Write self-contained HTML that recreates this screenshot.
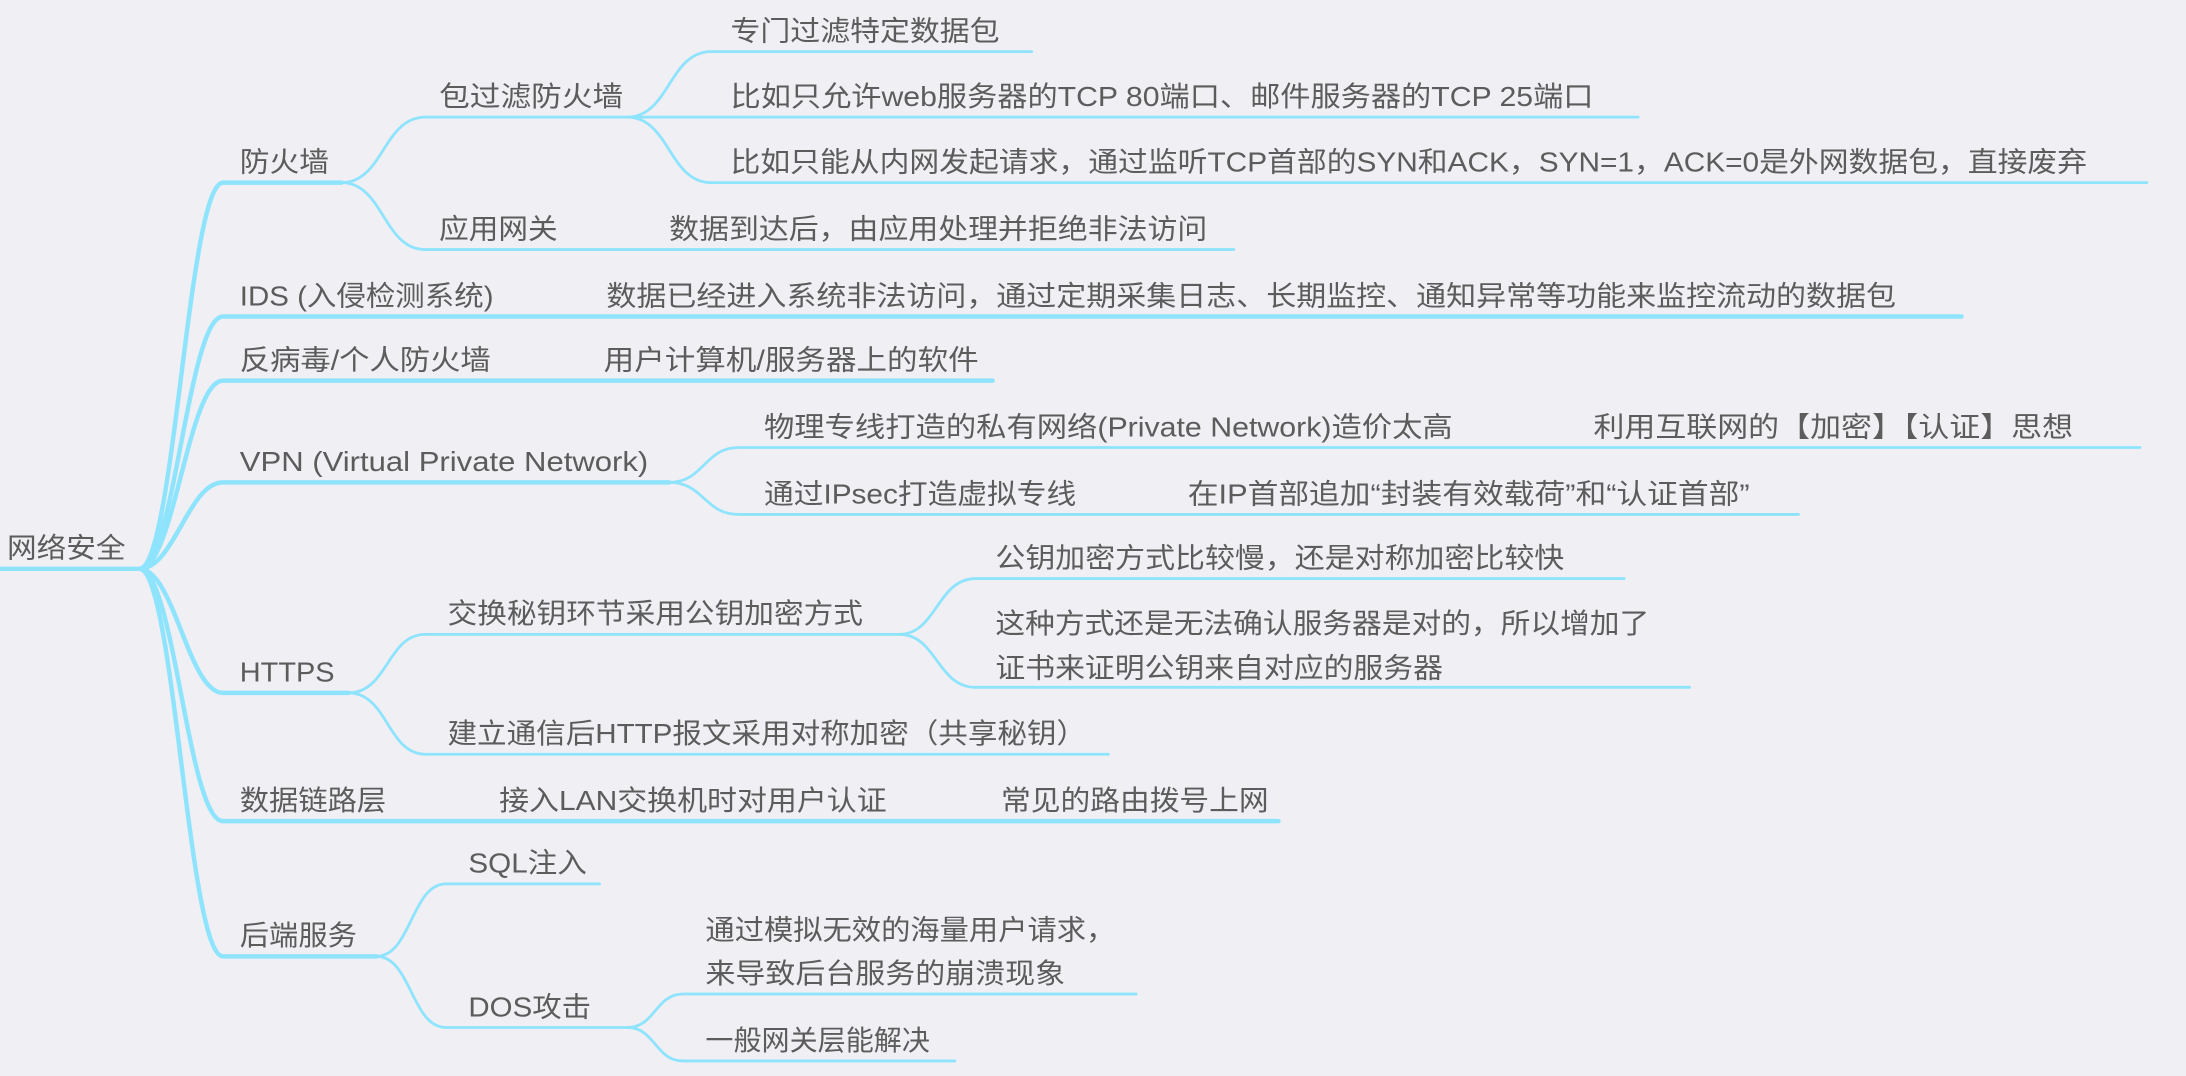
<!DOCTYPE html>
<html><head><meta charset="utf-8">
<style>
html,body{margin:0;padding:0;background:#efeff4;width:2186px;height:1076px;overflow:hidden}
svg{display:block}
text{font-family:"Liberation Sans","Noto Sans CJK SC",sans-serif;font-size:20px;fill:#5c5c5c}
.t{fill:none;stroke:#8ee3fd;stroke-linecap:round}
.a{stroke-width:3.2}
.b{stroke-width:2}
</style></head><body>
<svg width="2186" height="1076" viewBox="0 0 1568 771.8" xmlns="http://www.w3.org/2000/svg">
<rect width="1568" height="772" fill="#efeff4"/>
<g class="t a">
<path d="M0 408H100"/>
<path d="M100 408C125 408 135 131 160 131H245"/>
<path d="M100 408C125 408 135 227 160 227H1407"/>
<path d="M100 408C125 408 135 273 160 273H712"/>
<path d="M100 408C125 408 135 346 160 346H480"/>
<path d="M100 408C125 408 135 497 160 497H250"/>
<path d="M100 408C125 408 135 589 160 589H917"/>
<path d="M100 408C125 408 135 686 160 686H270"/>
</g>
<g class="t b">
<path d="M245 131C275 131 275 84 305 84H450"/>
<path d="M245 131C275 131 275 179 305 179H885"/>
<path d="M450 84C480 84 480 37 510 37H740"/>
<path d="M450 84H1175"/>
<path d="M450 84C480 84 480 131 510 131H1540"/>
<path d="M480 346C505 346 505 321 530 321H1535"/>
<path d="M480 346C505 346 505 369 530 369H1290"/>
<path d="M250 497C278 497 278 455 305 455H645"/>
<path d="M250 497C278 497 278 541 305 541H795"/>
<path d="M645 455C672 455 672 415 700 415H1165"/>
<path d="M645 455C672 455 672 493 700 493H1212"/>
<path d="M270 686C295 686 295 634 320 634H430"/>
<path d="M270 686C295 686 295 737 320 737H450"/>
<path d="M450 737C470 737 470 713 490 713H815"/>
<path d="M450 737C470 737 470 761 490 761H685"/>
</g>
<g>
<text x="5" y="400" textLength="85" lengthAdjust="spacingAndGlyphs">网络安全</text>
<text x="172" y="123" textLength="64" lengthAdjust="spacingAndGlyphs">防火墙</text>
<text x="315" y="76" textLength="132" lengthAdjust="spacingAndGlyphs">包过滤防火墙</text>
<text x="315" y="171" textLength="85" lengthAdjust="spacingAndGlyphs">应用网关</text>
<text x="480" y="171" textLength="386" lengthAdjust="spacingAndGlyphs">数据到达后，由应用处理并拒绝非法访问</text>
<text x="524" y="29" textLength="193" lengthAdjust="spacingAndGlyphs">专门过滤特定数据包</text>
<text x="524" y="76" textLength="619" lengthAdjust="spacingAndGlyphs">比如只允许web服务器的TCP 80端口、邮件服务器的TCP 25端口</text>
<text x="524" y="123" textLength="973" lengthAdjust="spacingAndGlyphs">比如只能从内网发起请求，通过监听TCP首部的SYN和ACK，SYN=1，ACK=0是外网数据包，直接废弃</text>
<text x="172" y="219" textLength="182" lengthAdjust="spacingAndGlyphs">IDS (入侵检测系统)</text>
<text x="435" y="219" textLength="925" lengthAdjust="spacingAndGlyphs">数据已经进入系统非法访问，通过定期采集日志、长期监控、通知异常等功能来监控流动的数据包</text>
<text x="172" y="265" textLength="180" lengthAdjust="spacingAndGlyphs">反病毒/个人防火墙</text>
<text x="433" y="265" textLength="269" lengthAdjust="spacingAndGlyphs">用户计算机/服务器上的软件</text>
<text x="172" y="338" textLength="293" lengthAdjust="spacingAndGlyphs">VPN (Virtual Private Network)</text>
<text x="548" y="313" textLength="494" lengthAdjust="spacingAndGlyphs">物理专线打造的私有网络(Private Network)造价太高</text>
<text x="1143" y="313" textLength="344" lengthAdjust="spacingAndGlyphs">利用互联网的【加密】【认证】思想</text>
<text x="548" y="361" textLength="224" lengthAdjust="spacingAndGlyphs">通过IPsec打造虚拟专线</text>
<text x="852" y="361" textLength="403" lengthAdjust="spacingAndGlyphs">在IP首部追加“封装有效载荷”和“认证首部”</text>
<text x="172" y="489" textLength="68" lengthAdjust="spacingAndGlyphs">HTTPS</text>
<text x="321" y="447" textLength="298" lengthAdjust="spacingAndGlyphs">交换秘钥环节采用公钥加密方式</text>
<text x="714" y="407" textLength="408" lengthAdjust="spacingAndGlyphs">公钥加密方式比较慢，还是对称加密比较快</text>
<text x="714" y="454" textLength="469" lengthAdjust="spacingAndGlyphs">这种方式还是无法确认服务器是对的，所以增加了</text>
<text x="714" y="486" textLength="321" lengthAdjust="spacingAndGlyphs">证书来证明公钥来自对应的服务器</text>
<text x="321" y="533" textLength="458" lengthAdjust="spacingAndGlyphs">建立通信后HTTP报文采用对称加密（共享秘钥）</text>
<text x="172" y="581" textLength="105" lengthAdjust="spacingAndGlyphs">数据链路层</text>
<text x="358" y="581" textLength="278" lengthAdjust="spacingAndGlyphs">接入LAN交换机时对用户认证</text>
<text x="718" y="581" textLength="192" lengthAdjust="spacingAndGlyphs">常见的路由拨号上网</text>
<text x="172" y="678" textLength="84" lengthAdjust="spacingAndGlyphs">后端服务</text>
<text x="336" y="626" textLength="85" lengthAdjust="spacingAndGlyphs">SQL注入</text>
<text x="336" y="729" textLength="88" lengthAdjust="spacingAndGlyphs">DOS攻击</text>
<text x="506" y="674" textLength="294" lengthAdjust="spacingAndGlyphs">通过模拟无效的海量用户请求，</text>
<text x="506" y="705" textLength="258" lengthAdjust="spacingAndGlyphs">来导致后台服务的崩溃现象</text>
<text x="506" y="753" textLength="161" lengthAdjust="spacingAndGlyphs">一般网关层能解决</text>
</g>
</svg>
</body></html>
